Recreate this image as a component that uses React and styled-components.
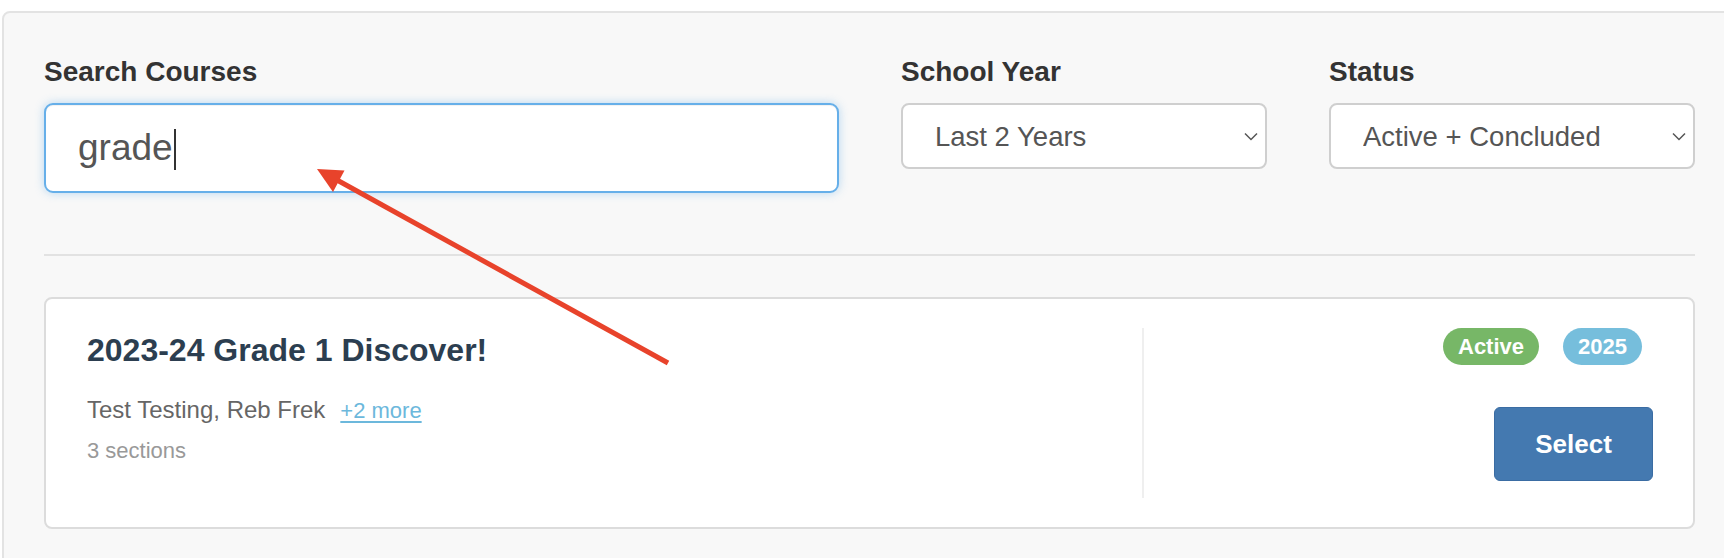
import React from "react";
import styled, { createGlobalStyle } from "styled-components";

const GlobalStyle = createGlobalStyle`
  html, body {
    margin: 0;
    padding: 0;
    background: #fff;
    overflow: hidden;
  }
  body {
    font-family: "Liberation Sans", Arial, Helvetica, sans-serif;
  }
`;

const Page = styled.div`
  position: relative;
  width: 1724px;
  height: 558px;
  padding: 11px 0 0 2px;
  box-sizing: border-box;
  overflow: hidden;
`;

const Panel = styled.section`
  width: max-content;
  min-height: 600px;
  padding: 43px 40px 0 40px;
  background: #f8f8f8;
  border: 2px solid #e3e3e3;
  border-radius: 8px;
  box-sizing: border-box;
`;

const FilterRow = styled.div`
  display: grid;
  grid-template-columns: 795px 366px 366px;
  column-gap: 62px;
  align-items: start;
`;

const Field = styled.div`
  display: flex;
  flex-direction: column;
`;

const Label = styled.label`
  display: block;
  font-size: 28px;
  line-height: 32px;
  font-weight: 700;
  color: #333;
  margin-bottom: 15px;
`;

const SearchBox = styled.div`
  height: 90px;
  box-sizing: border-box;
  padding: 0 32px;
  background: #fff;
  border: 2px solid #66afe9;
  border-radius: 9px;
  box-shadow: inset 0 1px 1px rgba(0, 0, 0, 0.06), 0 0 10px rgba(102, 175, 233, 0.45);
  display: flex;
  align-items: center;
  font-size: 37px;
  line-height: 86px;
  color: #555;
`;

const Caret = styled.span`
  display: inline-block;
  width: 2px;
  height: 41px;
  margin-left: 1px;
  background: #333;
  transform: translateY(1px);
`;

const SelectWrap = styled.div`
  position: relative;
`;

const Select = styled.select`
  appearance: none;
  -webkit-appearance: none;
  width: 100%;
  height: 66px;
  box-sizing: border-box;
  padding: 0 40px 0 32px;
  background: #fff;
  border: 2px solid #cfcfcf;
  border-radius: 8px;
  font-family: "Liberation Sans", Arial, Helvetica, sans-serif;
  font-size: 27.5px;
  color: #555;
  outline: none;
`;

const Chevron = styled.svg`
  position: absolute;
  right: 9px;
  top: 29px;
  width: 14px;
  height: 9px;
  pointer-events: none;
`;

const Divider = styled.hr`
  margin: 61px 0 41px;
  border: 0;
  height: 2px;
  background: #e2e2e2;
`;

const Card = styled.article`
  width: 1651px;
  box-sizing: border-box;
  display: flex;
  padding: 29px 40px 29px 41px;
  background: #fff;
  border: 2px solid #dcdcdc;
  border-radius: 8px;
  height: 232px;
`;

const CardMain = styled.div`
  flex: 1;
  padding-top: 4px;
`;

const Title = styled.h2`
  margin: 0 0 22px;
  font-size: 32px;
  line-height: 36px;
  font-weight: 700;
  color: #2c3e50;
`;

const Teachers = styled.div`
  font-size: 24px;
  line-height: 40px;
  color: #666;
`;

const MoreLink = styled.a`
  margin-left: 15px;
  font-size: 22px;
  color: #6cb8dc;
  text-decoration: underline;
  text-decoration-thickness: 2px;
  text-underline-offset: 3px;
  cursor: pointer;
`;

const Sections = styled.div`
  font-size: 22px;
  line-height: 40px;
  color: #999;
`;

const CardSide = styled.div`
  width: 509px;
  border-left: 2px solid #efefef;
  display: flex;
  flex-direction: column;
  align-items: flex-end;
`;

const Badges = styled.div`
  display: flex;
  gap: 24px;
  padding-right: 11px;
`;

const Badge = styled.span`
  height: 37px;
  padding: 0 15px;
  border-radius: 19px;
  background: ${(props) => props.color};
  color: #fff;
  font-size: 22px;
  font-weight: 700;
  line-height: 37px;
`;

const SelectButton = styled.button`
  margin-top: 42px;
  width: 159px;
  height: 74px;
  background: #4479b0;
  border: 1px solid #3a6ca3;
  border-radius: 6px;
  color: #fff;
  font-family: "Liberation Sans", Arial, Helvetica, sans-serif;
  font-size: 26px;
  font-weight: 700;
  cursor: pointer;
`;

const Annotation = styled.svg`
  position: absolute;
  left: 0;
  top: 0;
  width: 1724px;
  height: 558px;
  pointer-events: none;
`;

const ChevronIcon = () => (
  <Chevron viewBox="0 0 14 9">
    <path d="M1 1.5l6 6 6-6" fill="none" stroke="#555" strokeWidth="1.5" />
  </Chevron>
);

const App = () => {
  return (
    <>
      <GlobalStyle />
      <Page>
        <Panel>
          <FilterRow>
            <Field>
              <Label>Search Courses</Label>
              <SearchBox>
                grade
                <Caret />
              </SearchBox>
            </Field>
            <Field>
              <Label>School Year</Label>
              <SelectWrap>
                <Select defaultValue="2">
                  <option value="2">Last 2 Years</option>
                </Select>
                <ChevronIcon />
              </SelectWrap>
            </Field>
            <Field>
              <Label>Status</Label>
              <SelectWrap>
                <Select defaultValue="ac">
                  <option value="ac">Active + Concluded</option>
                </Select>
                <ChevronIcon />
              </SelectWrap>
            </Field>
          </FilterRow>

          <Divider />

          <Card>
            <CardMain>
              <Title>2023-24 Grade 1 Discover!</Title>
              <Teachers>
                Test Testing, Reb Frek
                <MoreLink>+2 more</MoreLink>
              </Teachers>
              <Sections>3 sections</Sections>
            </CardMain>
            <CardSide>
              <Badges>
                <Badge color="#77b767">Active</Badge>
                <Badge color="#76bedc">2025</Badge>
              </Badges>
              <SelectButton>Select</SelectButton>
            </CardSide>
          </Card>
        </Panel>

        <Annotation viewBox="0 0 1724 558">
          <line x1="668" y1="363" x2="337" y2="180" stroke="#e8432b" strokeWidth="5" />
          <polygon points="317,169 344.5,170.5 333,192" fill="#e8432b" />
        </Annotation>
      </Page>
    </>
  );
};

export default App;
